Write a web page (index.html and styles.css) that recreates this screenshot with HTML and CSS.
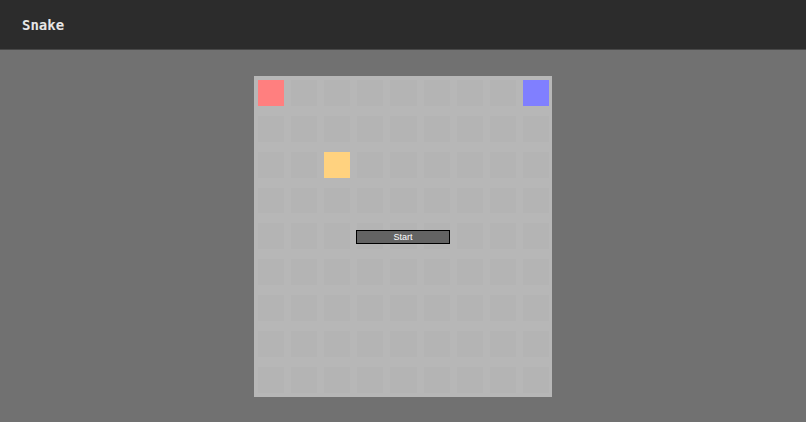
FILE: index.html
```html
<!DOCTYPE html>
<html lang="en">
<head>
<meta charset="utf-8">
<title>Snake</title>
<link rel="stylesheet" href="styles.css">
</head>
<body>
<header class="header"><h1 class="title">Snake</h1></header>
<main class="game">
  <div class="board">
    <div class="grid" id="grid"></div>
    <div class="overlay"><button class="start" type="button">Start</button></div>
  </div>
</main>
<script src="game.js"></script>
</body>
</html>
```
FILE: game.js
```js
const SIZE = 9;
const pieces = { 0: 'red', 8: 'blue', 20: 'food' };
const grid = document.getElementById('grid');
for (let i = 0; i < SIZE * SIZE; i++) {
  const cell = document.createElement('div');
  cell.className = 'cell';
  if (pieces[i]) cell.classList.add(pieces[i]);
  grid.append(cell);
}
```
FILE: styles.css
```css
* {
  box-sizing: border-box;
}

body {
  margin: 0;
  min-height: 100vh;
  display: flex;
  flex-direction: column;
  background: #717171;
}

.header {
  padding: 15px 22px 14px;
  background: #2c2c2c;
  border-bottom: 1px solid #484848;
}

.title {
  margin: 0;
  font: bold 14px/20px "DejaVu Sans Mono", monospace;
  color: #e6e6e6;
}

.game {
  display: flex;
  justify-content: center;
  padding: 26px 0;
}

.board {
  position: relative;
  width: 37vw;
  height: 76vh;
  background: #b7b7b7;
}

.grid {
  display: grid;
  grid-template: repeat(9, 1fr) / repeat(9, 1fr);
  gap: 10px 7px;
  height: 100%;
  padding: 4px 3px 4px 4px;
}

.cell {
  background: #b4b4b4;
}

.red {
  background: #ff7f7f;
}

.blue {
  background: #807fff;
}

.food {
  background: #ffd27f;
}

.overlay {
  position: absolute;
  inset: 0;
  display: flex;
  align-items: center;
  justify-content: center;
  padding-top: 1px;
}

.start {
  width: 94px;
  padding: 0;
  border: 1px solid #000;
  border-radius: 0;
  background: #636363;
  color: #fff;
  font: 9px/12px "Liberation Sans", Arial, sans-serif;
}
```
